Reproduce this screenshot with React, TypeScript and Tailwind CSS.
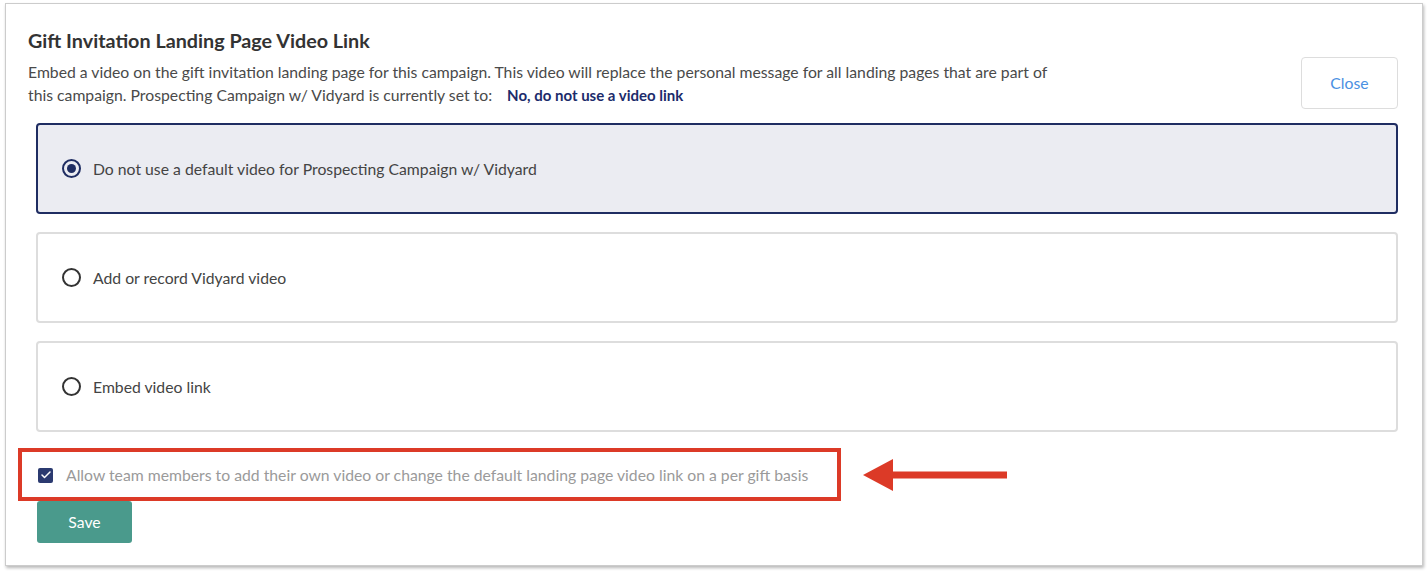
import { Check } from "lucide-react";

type OptionProps = {
  label: string;
  selected?: boolean;
  className?: string;
};

function VideoOption({ label, selected = false, className = "" }: OptionProps) {
  return (
    <label
      className={`flex h-[91px] items-center rounded-[4px] border-2 pl-[24px] ${
        selected ? "border-[#1f2d62] bg-[#ebecf2]" : "border-[#dddddd] bg-white"
      } ${className}`}
    >
      <span
        className={`flex h-[19px] w-[19px] items-center justify-center rounded-full border-2 ${
          selected ? "border-[#1f2d62]" : "border-[#333333]"
        }`}
      >
        {selected && <span className="h-[9px] w-[9px] rounded-full bg-[#1f2d62]" />}
      </span>
      <span className="ml-[12px] text-[15.75px] text-[#444444]">{label}</span>
    </label>
  );
}

export default function App() {
  return (
    <div className="relative h-[574px] w-[1428px] overflow-hidden bg-white font-['Lato','Noto_Sans',sans-serif]">
      <div className="ml-[5px] mt-[3px] h-[563px] w-[1418px] border border-[#cccccc] bg-white pl-[22px] pr-[24px] pt-[25px] shadow-[1px_2px_3px_rgba(0,0,0,0.28)]">
        <div className="flex justify-between">
          <div>
            <h2 className="text-[19.75px] font-bold leading-[24px] text-[#333333]">
              Gift Invitation Landing Page Video Link
            </h2>
            <p className="mt-[7px] text-[15.75px] leading-[23px] text-[#4a4a4a]">
              Embed a video on the gift invitation landing page for this campaign. This video will replace the personal message for all landing pages that are part of
              <br />
              this campaign. Prospecting Campaign w/ Vidyard is currently set to:
              <span className="ml-[15px] text-[15px] font-bold text-[#1c2b6b]">No, do not use a video link</span>
            </p>
          </div>
          <button className="mt-[28px] h-[52px] w-[97px] shrink-0 rounded-[4px] border border-[#dddddd] bg-white text-[15.75px] text-[#4a90e2]">
            Close
          </button>
        </div>

        <div className="ml-[8px] mt-[14px] flex flex-col gap-[18px]">
          <VideoOption selected label="Do not use a default video for Prospecting Campaign w/ Vidyard" />
          <VideoOption label="Add or record Vidyard video" />
          <VideoOption label="Embed video link" />
        </div>

        <div className="ml-[10px] mt-[31px] flex h-[24px] items-center">
          <span className="flex h-[15px] w-[15px] items-center justify-center rounded-[2px] bg-[#2b3a70]">
            <Check className="h-[12px] w-[12px] text-white" strokeWidth={3} />
          </span>
          <span className="ml-[13px] text-[15.75px] text-[#9a9a9a]">
            Allow team members to add their own video or change the default landing page video link on a per gift basis
          </span>
        </div>

        <button className="ml-[9px] mt-[14px] h-[42px] w-[95px] rounded-[3px] bg-[#4a9a8c] text-[15.75px] text-white">
          Save
        </button>
      </div>

      {/* annotation */}
      <div className="absolute left-[18px] top-[448px] h-[53px] w-[823px] border-[4px] border-[#dc3a27]" />
      <svg className="absolute left-[860px] top-[456px]" width="150" height="38" viewBox="0 0 150 38">
        <polygon points="3,19 33,3 33,35" fill="#dc3a27" />
        <rect x="32" y="15.5" width="115" height="7" fill="#dc3a27" />
      </svg>
    </div>
  );
}
